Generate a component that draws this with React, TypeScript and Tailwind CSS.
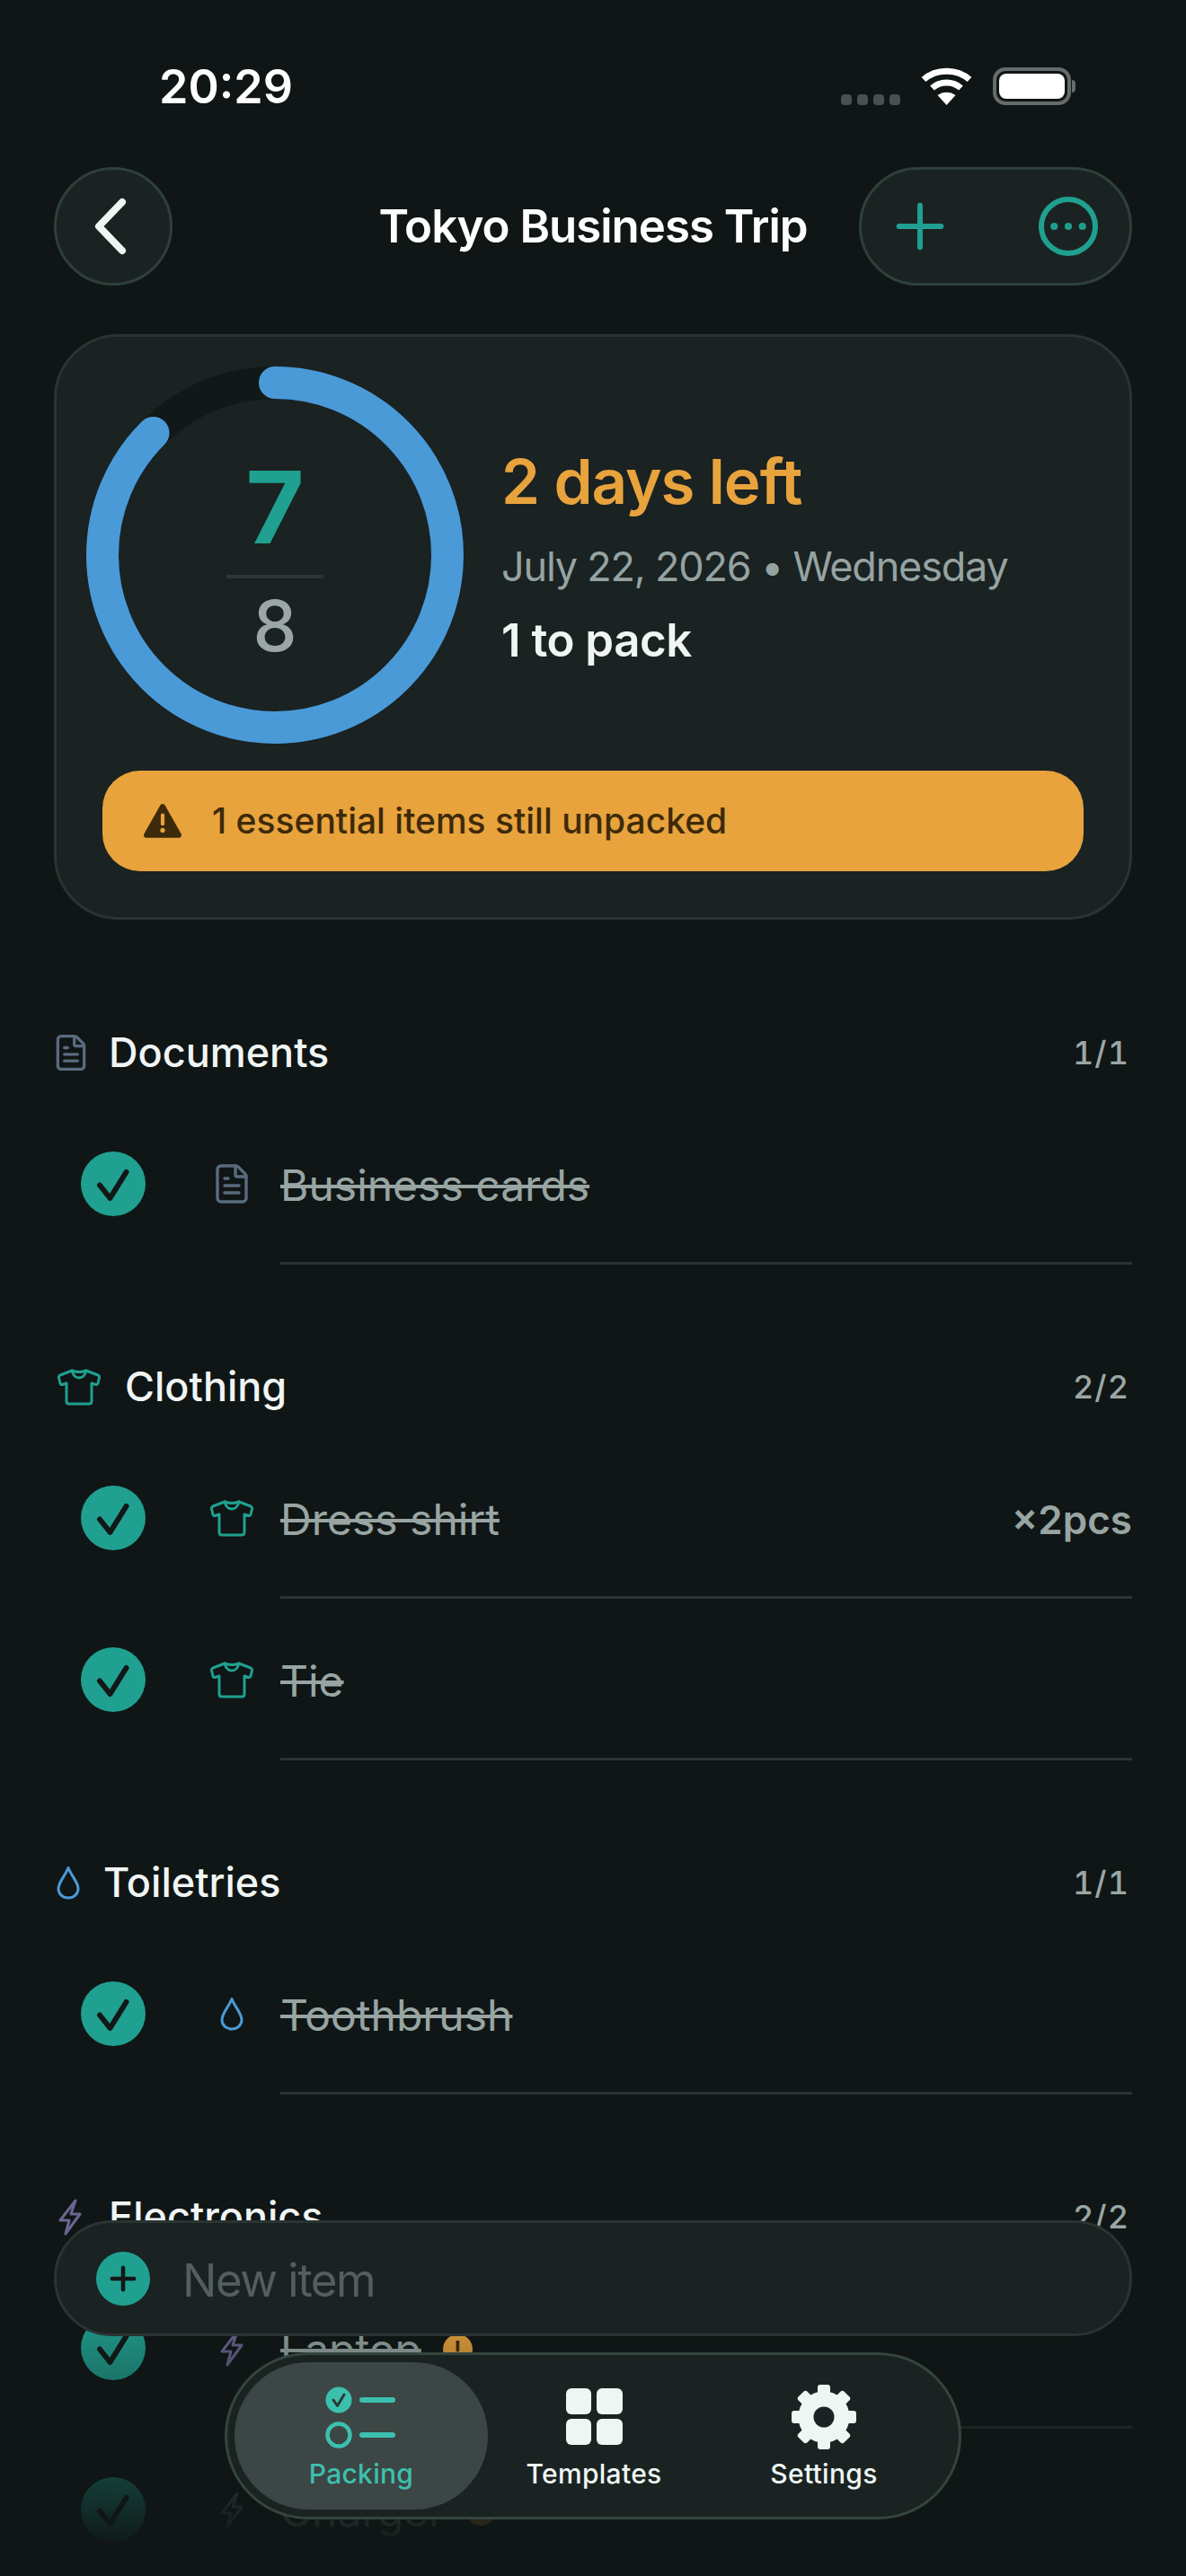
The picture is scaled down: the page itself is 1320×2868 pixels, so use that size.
import { FileText, Plus, Ellipsis } from 'lucide-react';
import type { ReactNode } from 'react';

function Wifi() {
  return (
    <svg width="57" height="42" viewBox="0 0 57 42" fill="none" stroke="white" strokeWidth="7">
      <path d="M3 13.5C17 1 40 1 54 13.5" />
      <path d="M12.5 23C21.5 15 35.5 15 44.5 23" />
      <path d="M28.5 42L18.5 31C24 26.5 33 26.5 38.5 31Z" fill="white" stroke="none" />
    </svg>
  );
}

function Gear() {
  const teeth = [0, 45, 90, 135, 180, 225, 270, 315];
  return (
    <svg width="72" height="72" viewBox="-36 -36 72 72" fill="#eef6f4">
      {teeth.map(a => (
        <rect key={a} x="-7" y="-36" width="14" height="16" rx="3" transform={`rotate(${a})`} />
      ))}
      <circle r="20" fill="none" stroke="#eef6f4" strokeWidth="17" />
    </svg>
  );
}

function TShirt() {
  return (
    <svg width="50" height="41" viewBox="0 0 50 41" fill="none" stroke="#20a090" strokeWidth="3" strokeLinejoin="round" strokeLinecap="round">
      <path d="M17 2L4 7Q2 8 2.5 10L4 16Q4.5 18 6.5 17.5L11 16V36Q11 39 14 39H36Q39 39 39 36V16L43.5 17.5Q45.5 18 46 16L47.5 10Q48 8 46 7L33 2Q25 5 17 2Z" />
      <path d="M17 2Q19 10 25 10Q31 10 33 2" />
    </svg>
  );
}

function Drop() {
  return (
    <svg width="26" height="38" viewBox="0 0 26 38" fill="none" stroke="#4a9ad8" strokeWidth="3" strokeLinejoin="round">
      <path d="M13 2.5C10 11 2 18 2 26a11 10 0 0 0 22 0C24 18 16 11 13 2.5Z" />
    </svg>
  );
}

function Bolt() {
  return (
    <svg width="26" height="41" viewBox="0 0 26 41" fill="none" stroke="#6a6590" strokeWidth="3" strokeLinejoin="round">
      <path d="M19 2L2 24H12L8 39L24 17H14Z" />
    </svg>
  );
}

function CheckCircle() {
  return (
    <div className="w-[72px] h-[72px] rounded-full bg-[#20a090] shrink-0">
      <svg width="72" height="72" viewBox="0 0 72 72" fill="none" stroke="#111817" strokeWidth="6" strokeLinecap="round" strokeLinejoin="round">
        <path d="M21 37.5L32.5 52L50.5 23" />
      </svg>
    </div>
  );
}

function Row({ icon, name, qty, badge }: { icon: ReactNode; name: string; qty?: string; badge?: boolean }) {
  return (
    <div className="flex h-[180px]">
      <div className="w-[252px] pl-[30px] flex items-center shrink-0">
        <CheckCircle />
        <div className="w-[108px] ml-[42px] flex items-center justify-center">{icon}</div>
      </div>
      <div className="flex-1 pt-[6px] border-b-[3px] border-[#2c3334] flex items-center justify-between">
        <div className="flex items-center gap-[24px]">
          <span className="text-[48px] text-[#98a5a3] line-through">{name}</span>
          {badge && (
            <span className="w-[33px] h-[33px] rounded-full bg-[#e8a33d] text-[#3d2a0a] text-[24px] font-bold flex items-center justify-center">!</span>
          )}
        </div>
        {qty && <span className="text-[44px] font-semibold text-[#98a5a3]">{qty}</span>}
      </div>
    </div>
  );
}

function Section({ icon, title, count, children }: { icon: ReactNode; title: string; count: string; children: ReactNode }) {
  return (
    <section className="mb-[106px]">
      <div className="flex items-center justify-between h-[60px] mb-[26px]">
        <div className="flex items-center">
          {icon}
          <h2 className="text-[45px] font-medium text-[#f0f5f4]">{title}</h2>
        </div>
        <span className="text-[36px] font-medium tabular-nums text-[#9ba6a5] tracking-[1px] pr-[3px]">{count}</span>
      </div>
      {children}
    </section>
  );
}

export default function App() {
  const r = 192;
  const circ = 2 * Math.PI * r;
  const slate = '#5a6b7e';
  const teal = '#20a090';
  const blue = '#4a9ad8';

  return (
    <div className="relative w-[1320px] h-[2868px] overflow-hidden bg-[#0f1615] font-['Inter',sans-serif]">
      {/* status bar */}
      <div className="h-[186px] flex items-start justify-between pt-[66px] pl-[177px] pr-[123px]">
        <span className="text-[52px] leading-[62px] font-semibold text-white">20:29</span>
        <div className="flex items-end gap-[23px] mt-[9px]">
          <div className="flex gap-[6px]">
            <span className="w-[12px] h-[12px] rounded-[4px] bg-[#4a4f4f]" />
            <span className="w-[12px] h-[12px] rounded-[4px] bg-[#4a4f4f]" />
            <span className="w-[12px] h-[12px] rounded-[4px] bg-[#4a4f4f]" />
            <span className="w-[12px] h-[12px] rounded-[4px] bg-[#4a4f4f]" />
          </div>
          <Wifi />
          <div className="flex items-center">
            <div className="w-[87px] h-[42px] rounded-[14px] border-[4px] border-[#666b6b] p-[3px]">
              <div className="w-full h-full rounded-[8px] bg-white" />
            </div>
            <div className="w-[4px] h-[14px] ml-[1px] rounded-r-full bg-[#666b6b]" />
          </div>
        </div>
      </div>

      <div className="px-[60px]">
        {/* nav */}
        <div className="grid grid-cols-[1fr_auto_1fr] items-center h-[132px]">
          <button className="w-[132px] h-[132px] rounded-full bg-[#1b2322] border-[3px] border-[#2f3f3b] flex items-center justify-center pr-[6px]">
            <svg width="40" height="64" viewBox="0 0 40 64" fill="none" stroke="#eef6f4" strokeWidth="8" strokeLinecap="round" strokeLinejoin="round">
              <path d="M33 5L7 32L33 59" />
            </svg>
          </button>
          <h1 className="text-[51px] font-semibold tracking-[-1px] text-white">Tokyo Business Trip</h1>
          <div className="justify-self-end w-[304px] h-[132px] rounded-full bg-[#1b2322] border-[3px] border-[#2f3f3b] flex items-center justify-between pl-[25px] pr-[35px]">
            <Plus size={80} strokeWidth={1.8} color={teal} />
            <div className="w-[66px] h-[66px] rounded-full border-[6px] border-[#20a090] flex items-center justify-center">
              <Ellipsis size={54} strokeWidth={1.6} color={teal} />
            </div>
          </div>
        </div>

        {/* summary card */}
        <div className="mt-[54px] h-[652px] rounded-[72px] bg-[#1a2222] border-[3px] border-[#2a3432]">
          <div className="flex items-center pl-[33px] pt-[33px]">
            <div className="relative w-[420px] h-[420px] shrink-0">
              <svg width="420" height="420" viewBox="0 0 420 420" className="-rotate-90">
                <circle cx="210" cy="210" r={r} fill="none" stroke="#111817" strokeWidth="36" />
                <circle cx="210" cy="210" r={r} fill="none" stroke={blue} strokeWidth="36" strokeLinecap="round" strokeDasharray={`${circ * 0.875} ${circ}`} />
              </svg>
              <div className="absolute inset-0 pt-[10px] flex flex-col items-center justify-center">
                <span className="text-[112px] leading-[116px] font-bold text-[#20a090]">7</span>
                <span className="w-[108px] h-[4px] mt-[18px] mb-[10px] bg-[#2d3636]" />
                <span className="text-[78px] leading-[86px] font-medium text-[#9ba6a5]">8</span>
              </div>
            </div>
            <div className="ml-[42px] pt-[3px] flex flex-col">
              <span className="text-[69px] leading-[80px] font-semibold tracking-[-1px] text-[#e8a33d]">2 days left</span>
              <span className="mt-[28px] text-[45px] leading-[54px] tracking-[-1.2px] text-[#95a3a2]">July 22, 2026 • Wednesday</span>
              <span className="mt-[25px] text-[51px] leading-[60px] font-semibold tracking-[-0.5px] text-[#f0f5f4]">1 to pack</span>
            </div>
          </div>
          <div className="mx-[51px] mt-[30px] h-[112px] rounded-[42px] bg-[#e8a33d] flex items-center pl-[45px] gap-[33px]">
            <svg width="44" height="40" viewBox="0 0 42 38">
              <path d="M21 4L38 34H4Z" fill="#3d2a0a" stroke="#3d2a0a" strokeWidth="6" strokeLinejoin="round" />
              <rect x="19" y="11" width="4" height="13" rx="2" fill="#e8a33d" />
              <circle cx="21" cy="29" r="2.5" fill="#e8a33d" />
            </svg>
            <span className="text-[39px] font-medium text-[#3d2a0a]">1 essential items still unpacked</span>
          </div>
        </div>

        {/* packing list */}
        <div className="mt-[118px]">
          <Section icon={<FileText size={44} strokeWidth={1.8} color={slate} className="-ml-[3px] mr-[20px]" />} title="Documents" count="1/1">
            <Row icon={<FileText size={48} strokeWidth={1.7} color={slate} />} name="Business cards" />
          </Section>
          <Section icon={<div className="ml-[3px] mr-[26px]"><TShirt /></div>} title="Clothing" count="2/2">
            <Row icon={<TShirt />} name="Dress shirt" qty="×2pcs" />
            <Row icon={<TShirt />} name="Tie" />
          </Section>
          <Section icon={<div className="ml-[3px] mr-[26px]"><Drop /></div>} title="Toiletries" count="1/1">
            <Row icon={<Drop />} name="Toothbrush" />
          </Section>
          <Section icon={<div className="ml-[5px] mr-[30px]"><Bolt /></div>} title="Electronics" count="2/2">
            <Row icon={<Bolt />} name="Laptop" badge />
            <Row icon={<Bolt />} name="Charger" badge />
          </Section>
        </div>
      </div>

      {/* fade under the floating bars */}
      <div className="absolute left-0 right-0 top-[2560px] bottom-0 bg-linear-to-b from-transparent to-[#0f1615] to-[91%]" />

      {/* new item input */}
      <div className="absolute left-[60px] top-[2472px] w-[1200px] h-[129px] rounded-full bg-[#1a2222] border-[3px] border-[#2a3432] flex items-center pl-[44px] gap-[36px]">
        <div className="w-[60px] h-[60px] rounded-full bg-[#20a090] flex items-center justify-center">
          <Plus size={42} strokeWidth={2.6} color="#111817" />
        </div>
        <span className="pt-[6px] text-[51px] tracking-[-1.5px] text-[#545e5e]">New item</span>
      </div>

      {/* tab bar */}
      <nav className="absolute left-[250px] top-[2619px] w-[820px] h-[186px] rounded-full bg-[#1b2322] border-[3px] border-[#34453f] p-[8px] flex items-center">
        <div className="w-[282px] h-full rounded-full bg-[#3c4645] flex flex-col items-center justify-end pb-[17px]">
          <svg width="80" height="70" viewBox="0 0 80 70" fill="none">
            <circle cx="15" cy="15" r="14.5" fill="#3cc0ae" />
            <path d="M9 15l4.5 6.5L21 9" stroke="#2c3837" strokeWidth="3" strokeLinecap="round" strokeLinejoin="round" />
            <circle cx="15" cy="54" r="12.5" stroke="#3cc0ae" strokeWidth="4.5" />
            <rect x="38" y="12" width="40" height="6" rx="3" fill="#3cc0ae" />
            <rect x="38" y="51" width="40" height="6" rx="3" fill="#3cc0ae" />
          </svg>
          <span className="mt-[5px] text-[30px] font-medium tracking-[0.3px] text-[#3cc0ae]">Packing</span>
        </div>
        <div className="w-[236px] h-full flex flex-col items-center justify-end pb-[17px]">
          <div className="grid grid-cols-2 gap-x-[6px] gap-y-[5px] w-[63px]">
            <span className="h-[29px] rounded-[6px] bg-[#eef6f4]" />
            <span className="h-[29px] rounded-[6px] bg-[#eef6f4]" />
            <span className="h-[29px] rounded-[6px] bg-[#eef6f4]" />
            <span className="h-[29px] rounded-[6px] bg-[#eef6f4]" />
          </div>
          <span className="mt-[10px] text-[30px] font-medium tracking-[0.3px] text-[#eef6f4]">Templates</span>
        </div>
        <div className="w-[276px] h-full flex flex-col items-center justify-end pb-[17px]">
          <Gear />
          <span className="mt-[5px] text-[30px] font-medium tracking-[0.3px] text-[#eef6f4]">Settings</span>
        </div>
      </nav>
    </div>
  );
}
